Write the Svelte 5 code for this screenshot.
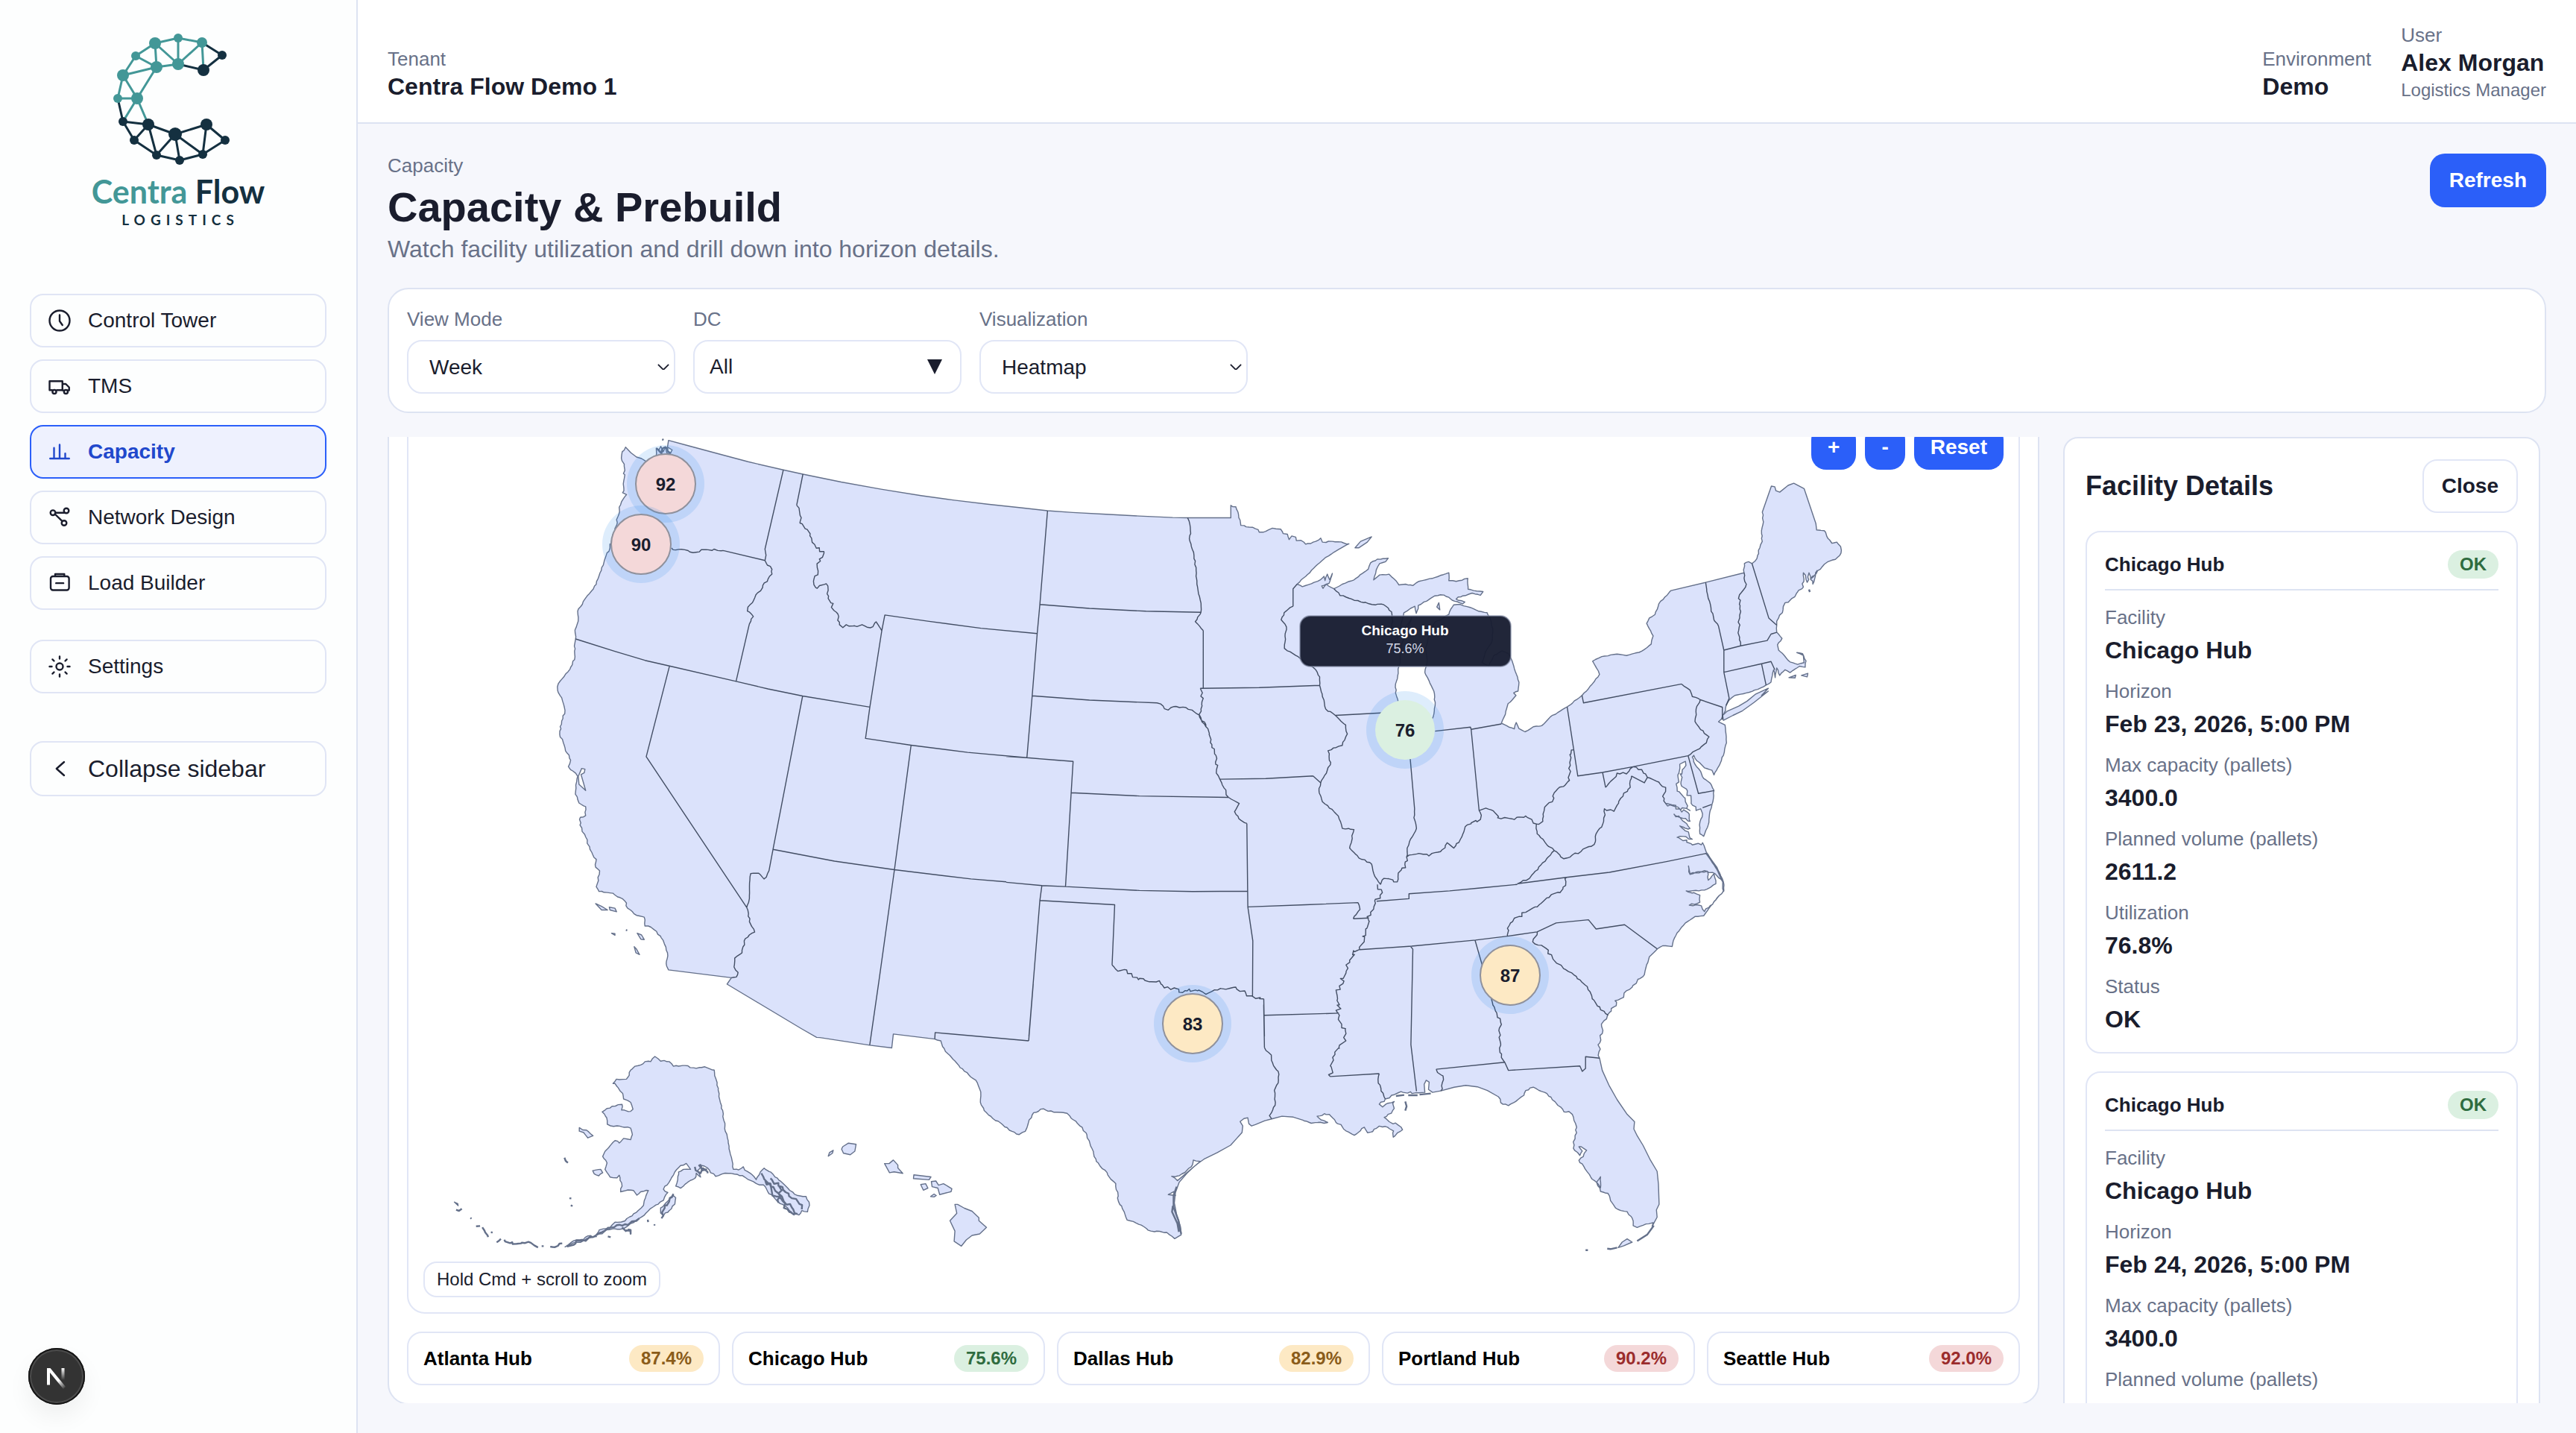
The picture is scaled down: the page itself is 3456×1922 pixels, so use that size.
<script>
  const nav = [
    { label: 'Control Tower', icon: 'clock' },
    { label: 'TMS', icon: 'truck' },
    { label: 'Capacity', icon: 'chart', active: true },
    { label: 'Network Design', icon: 'network' },
    { label: 'Load Builder', icon: 'load' }
  ];

  const hubs = [
    { name: 'Atlanta Hub', value: '87.4%', tone: 'warn' },
    { name: 'Chicago Hub', value: '75.6%', tone: 'ok' },
    { name: 'Dallas Hub', value: '82.9%', tone: 'warn' },
    { name: 'Portland Hub', value: '90.2%', tone: 'bad' },
    { name: 'Seattle Hub', value: '92.0%', tone: 'bad' }
  ];

  const markers = [
    { x: 893, y: 649, label: '92', tone: 'bad' },
    { x: 860, y: 730, label: '90', tone: 'bad' },
    { x: 1600, y: 1373, label: '83', tone: 'warn' },
    { x: 2026, y: 1308, label: '87', tone: 'warn' },
    { x: 1885, y: 979, label: '76', tone: 'ok' }
  ];

  const facility = (date) => [
    ['Facility', 'Chicago Hub'],
    ['Horizon', date],
    ['Max capacity (pallets)', '3400.0'],
    ['Planned volume (pallets)', '2611.2'],
    ['Utilization', '76.8%'],
    ['Status', 'OK']
  ];
  const details = [facility('Feb 23, 2026, 5:00 PM'), facility('Feb 24, 2026, 5:00 PM')];

  // Each map sheet has its own origin and grid step: [x, y, stepX, stepY].
  const sheets = {
    A: [700, 570, 0.44643, 0.47832],
    B: [1350, 640, 0.44643, 0.47832],
    C: [1700, 640, 0.5102, 0.47832],
    D: [540, 1380, 0.38265, 0.34566],
    E: [1100, 1300, 0.5102, 0.39668],
    F: [1750, 1150, 0.44643, 0.49235]
  };

  let seed = 7;
  function rand() {
    seed = (seed * 16807) % 2147483647;
    return seed / 2147483647 - 0.5;
  }

  // Converts "A: x,y x,y" into points; "~n" adds a river or shoreline waver of n pixels.
  function points(line) {
    const [head, body] = line.split(':');
    const [id, wave] = head.trim().split('~');
    const [ox, oy, sx, sy] = sheets[id];
    let pts = body.trim().split(/\s+/).map((p) => {
      const [x, y] = p.split(',').map(Number);
      return [ox + x * sx, oy + y * sy];
    });
    if (wave) {
      const out = [pts[0]];
      for (let i = 1; i < pts.length; i++) {
        const [ax, ay] = pts[i - 1];
        const [bx, by] = pts[i];
        const len = Math.hypot(bx - ax, by - ay);
        const n = Math.max(1, Math.round(len / 4));
        for (let k = 1; k < n; k++) {
          out.push([
            ax + ((bx - ax) * k) / n + rand() * wave,
            ay + ((by - ay) * k) / n + rand() * wave
          ]);
        }
        out.push([bx, by]);
      }
      pts = out;
    }
    return pts;
  }
  const toPath = (pts) => 'M' + pts.map((p) => p[0].toFixed(1) + ' ' + p[1].toFixed(1)).join('L');
  const open = (list) => list.map((l) => toPath(points(l))).join('');
  const closed = (list) => list.map((l) => toPath(points(l)) + 'Z').join('');

  const mainland = toPath([
    'A: 312,62 328,78 345,90 360,94 372,101 390,108 402,98 405,80 404,65 412,70 418,60 425,75 432,62 436,78 445,82 452,70 438,62 441,43 500,58 600,83 680,103 786,126 845,138 960,160 1080,180 1200,198 1300,211 1400,222 1500,232',
    'B: 124,94 200,99 300,104 400,109 500,113 545,114 675,114 675,79',
    'B~2: 675,79 690,83 698,105 705,135 730,140 757,147 760,154 780,152 800,143 825,146 832,158 845,160 850,175 858,165 870,168 872,178 885,177 900,188 915,186 930,180 945,171 950,182 980,180 1030,187',
    'B~1: 1030,187 1000,202 960,225 935,245 900,278 874,300 890,307 925,295 945,287 955,278 958,290 965,272 972,288 980,270 970,298 962,300 948,305 952,312 962,300 985,313 1010,300 1045,288 1070,270 1088,258 1095,240 1115,230 1148,227 1140,237 1122,242 1112,260 1104,288 1122,274 1150,272 1165,285 1180,302 1200,300 1222,304 1240,292 1280,284 1330,268 1330,290 1352,292 1387,284 1388,314 1405,318 1433,321 1425,331 1400,325 1380,332 1358,336 1352,342 1378,350 1372,355 1340,345',
    'B~2: 1340,345 1330,337 1305,330 1275,340 1255,350 1238,360 1232,382 1228,362 1215,368 1205,375 1195,380 1190,400 1175,440 1163,470 1185,440 1218,395 1205,430 1190,465 1184,510 1180,530 1178,550 1170,580 1170,605 1178,630 1195,660',
    'B~1: 1195,660 1210,690 1240,700 1270,690 1283,672 1289,640 1285,600 1270,570 1258,548 1265,515 1260,480 1275,430 1290,405 1305,400 1330,385 1336,370 1345,358 1365,357 1385,363 1420,376 1445,380 1456,400 1462,425 1460,460 1440,490 1430,520 1450,530 1465,500 1490,487 1510,495 1520,515 1530,545 1541,575 1538,600 1525,605 1532,612 1520,625 1508,635 1500,665 1488,690',
    'C~1: 616,690 630,697 650,706 655,688 662,705 678,714 700,700 722,697 745,672 770,656 789,644 828,612 855,580 874,553 866,535 856,516 880,503 920,496 945,500 985,488 1010,468 1015,445 1005,425 998,410 1005,395 1020,385 1030,355 1062,318',
    'C: 1062,318 1153,295 1254,268',
    'C~2: 1254,268 1255,242 1266,237 1275,242 1288,228 1292,205 1302,180 1300,150 1305,125 1302,98',
    'C: 1302,98 1326,25 1335,27 1338,38 1348,42 1370,23 1385,17 1412,32 1443,130',
    'C~3: 1445,148 1465,150 1475,172 1485,185 1498,182 1510,205 1500,225 1480,235 1455,258 1440,275 1430,285 1446,262 1435,300 1425,268 1420,295 1410,268 1410,308 1395,322 1380,340 1362,352 1355,380 1345,395 1340,415 1340,435',
    'C~1: 1340,435 1354,452 1342,470 1345,485 1360,500 1375,518 1395,525 1412,520 1410,500 1393,492 1408,495 1417,515 1415,533 1400,530 1388,538 1375,548 1362,540 1348,556 1340,535 1336,562 1332,540 1325,575 1312,583 1290,595 1260,605 1230,612 1215,625 1207,640 1205,655 1195,678 1187,686 1204,695 1208,745 1200,780 1185,815 1175,835 1170,822 1150,815 1130,795 1122,780 1118,785 1125,805 1140,825 1148,845 1165,858 1175,878 1172,910 1165,935 1160,975 1148,1007 1138,1000 1137,975 1145,945',
    'C~5: 1145,945 1140,930 1128,935 1115,915 1105,880 1088,860 1092,820 1100,797 1085,805 1080,835 1078,870 1090,890 1100,910 1112,935 1080,925 1048,915 1085,930 1110,945 1112,965 1070,945 1095,965 1112,985 1085,978 1108,995 1118,1015 1078,1010 1115,1028 1145,1025',
    'C~1: 1145,1025 1155,1052 1170,1080 1190,1110 1200,1135 1201,1160 1175,1190 1148,1230 1125,1232 1100,1250 1078,1278 1068,1300 1065,1316 1040,1314 1026,1323 1005,1345 996,1375 992,1395',
    'C~4: 992,1395 975,1408 960,1430 945,1440 930,1462 915,1468 918,1482 905,1490 895,1508',
    'F~4: 911,430 900,445 893,460 895,480 888,505 885,530 887,547',
    'F: 887,547 895,580 915,620 940,660 970,700 992,720 990,740 1000,758 1018,785 1040,825 1060,855 1064,890 1066,945 1058,960 1060,980 1045,1005 1048,995',
    'F~2: 1048,995 1035,998 1000,1008 988,1003 988,990 970,965 935,955 920,935 912,915 890,910 878,885 890,870 890,900 878,885 860,870 835,835 825,825 838,815 848,798 838,792 825,788 835,800 828,812 812,798 808,775 818,750 815,725 805,700 795,692 780,693 770,680 745,660 722,640 688,626 665,635 660,648 635,665 613,676 590,668 583,652',
    'F: 583,652 550,635 520,625 485,621 450,626 410,636 385,640 373,632 375,612 366,607 360,618 362,640',
    'F~3: 362,640 335,641 290,638 262,648 243,658 225,672 235,680 245,672 262,668 270,665 265,690 240,708 255,720 280,728 295,742 280,750 267,762 268,745 250,735 225,732',
    'F~3: 225,732 205,747 190,750 180,735 168,745 150,757 125,745 110,728 95,722 75,700 60,698 38,705 50,715 70,722 40,722 15,722 0,718',
    'E: 1270,510 1245,500 1215,497 1188,506 1170,512 1145,525 1135,530 1128,522 1125,502 1115,505 1105,515 1112,530 1110,552 1096,572 1080,595 1045,620 1010,642 985,665 965,690 945,720 935,755 932,790 938,830 948,870 950,898 933,911',
    'E~2: 933,911 912,890 870,885 845,865 808,848 800,820 785,785 778,725 765,710 750,680 727,650 715,605 702,560 690,535 665,508 650,487 600,480 588,472 562,485 548,520 540,548 524,559 505,548 480,525 455,505 432,478 422,450 423,415 410,375 380,345 355,310 330,278 318,242 302,236',
    'E: 302,236 193,219 189,266 131,257 0,231',
    'D: 1452,33 1400,0',
    'A: 617,1568 630,1550 441,1528',
    'A~2: 441,1528 434,1510 438,1480 425,1445 405,1420 388,1408 370,1405 368,1380 345,1375 318,1355 310,1335 295,1325 265,1312 232,1308 224,1295 234,1250 222,1240 224,1218 205,1190 192,1155 175,1122 176,1100 192,1095 192,1070 172,1060 161,1035 165,1000 168,985 140,958 147,940 130,905 114,868 120,830 130,800 120,765 108,745 110,725 145,685 160,650 158,620 162,600 160,575 170,540 168,522 190,488 215,460 235,415 250,375 265,345',
    'A~3: 265,345 280,290 292,250 300,215 315,195 303,190 308,150 308,110 301,100 302,75 312,62'
  ].flatMap(points)) + 'Z';

  const borders = open([
    'A~3: 450,345 455,350 490,350 505,356 560,350 605,352',
    'A: 605,352 731,380',
    'A: 786,126 731,348 734,365 731,380',
    'A~3: 731,380 738,393 752,405 752,418 740,432 718,465 700,485 685,505 678,522 696,537 682,565',
    'A: 682,565 644,719',
    'A: 162,600 280,635 370,660 444,676 644,719 740,740 844,760 1046,791',
    'A: 845,138 826,225',
    'A~4: 826,225 840,260 836,275 858,293 880,335 895,355 908,355 888,400 890,420 878,432 878,448 888,458 915,445 922,480 938,520 950,530 955,560 965,568 975,560 1000,563 1030,563 1055,566 1065,552 1082,577',
    'A: 1082,577 1091,533 1220,550 1380,570 1549,585',
    'A: 1082,577 1046,791 1033,879 1170,898 1340,918 1518,933 1620,941',
    'B: 124,94 101,357 93,439 78,613 62,787',
    'A: 444,676 374,930 676,1353',
    'A: 844,760 755,1190 743,1250',
    'A~2: 743,1250 735,1268 728,1273 718,1262 712,1257 688,1258 684,1320 676,1353 688,1400 700,1422 672,1440 662,1480 640,1495 638,1520 650,1535 645,1548 630,1550',
    'A: 755,1190 940,1223 1120,1247 1350,1273 1456,1281',
    'A: 1170,898 1120,1247 1072,1568',
    'E: 154,50 131,257',
    'E: 549,242 303,214 302,236',
    'B: 107,1145 101,1187 68,1568',
    'E: 561,50 549,242',
    'B: 0,783 62,787 201,797 195,885 178,1148',
    'B: 101,357 250,368 420,376 585,379',
    'B: 78,613 250,625 453,633',
    'B~3: 453,633 487,653 495,646 540,646 565,658 585,675 600,700',
    'B: 195,885 400,894 668,898',
    'B: 0,1136 107,1145 178,1148 400,1159 560,1162 725,1161',
    'B: 101,1187 326,1199 318,1368',
    'B~5: 318,1368 335,1385 362,1382 380,1402 430,1415 460,1412 475,1432 505,1432 530,1445 550,1435 575,1440 600,1450 625,1438 660,1436 690,1430 720,1447 750,1462 774,1463',
    'B: 774,1463 776,1568',
    'B: 726,1205 741,1300 740,1455',
    'B: 776,1509 1000,1503',
    'E: 1167,120 1169,265',
    'E~2: 1169,265 1187,290 1190,315 1207,355 1205,385 1195,410 1197,460 1182,495 1188,506',
    'B~2: 668,898 700,915 686,938 705,962 723,971',
    'B: 723,971 726,1205',
    'B: 726,1205 900,1199 1057,1193',
    'B~2: 1057,1193 1063,1212 1043,1238',
    'B: 1043,1238 1090,1236',
    'B~2: 545,114 553,140 552,180 568,235 573,300 583,345 585,379 568,405 592,430',
    'B: 592,430 592,591',
    'B~4: 583,592 592,620 585,650 580,665 600,700 618,750 630,780 632,820 642,847 655,872 668,898',
    'B: 583,592 760,590 942,584',
    'B: 642,847 780,845 922,838',
    'B: 922,838 945,857',
    'B: 874,300 862,313 862,362',
    'B~2: 862,362 835,380 826,400 842,420 836,480 870,500 930,540 942,560 942,584 955,625 960,650 989,668 1020,695 1025,720 1010,752 967,767 975,800 962,830 945,857 940,880 950,910 998,950 1010,985 1045,988 1032,1040 1060,1068 1098,1085 1108,1120 1125,1142',
    'B: 989,668 1125,661 1200,658',
    'B~2: 985,313 1003,332 1090,355 1135,358 1158,378 1162,440',
    'B: 1214,790 1227,930',
    'B~2: 1227,930 1225,955 1233,985 1215,1015 1205,1040 1203,1065',
    'B: 1289,712 1395,701 1397,707 1488,692',
    'B: 1397,707 1421,935',
    'B~4: 1125,1142 1135,1125 1175,1135 1178,1110 1200,1095 1203,1065 1240,1055 1270,1062 1305,1050 1325,1025 1345,1040 1365,1015 1385,975 1425,960 1421,935',
    'C~4: 557,935 575,928 600,942 615,958 650,960 680,950 700,970 710,973 725,965 730,925 750,910 755,885 795,850 800,765 806,765',
    'C: 789,644 817,838 882,828 962,812 1107,781 1134,887 1175,879',
    'C: 828,612 832,633 1090,580',
    'C~2: 1090,580 1112,597 1118,615 1139,624',
    'C: 1139,624 1197,645 1197,680',
    'C~2: 1139,624 1128,650 1125,685 1140,708 1162,728 1155,745 1130,765 1120,770 1107,781',
    'C: 1145,927 1168,918',
    'C~3: 890,870 920,830 945,832 962,812 985,820 1000,842 1030,855 1048,870 1040,895 1048,915',
    'C: 882,828 890,870',
    'C: 1000,842 992,857 958,838',
    'C~3: 958,838 955,870 930,900 912,937 887,930 885,965 865,1000 860,1030 825,1050 780,1070 755,1047 735,1030 710,1000 708,973',
    'C~2: 755,1047 735,1070 705,1105 690,1125 658,1140',
    'C: 658,1140 787,1122 900,1108 1050,1078 1155,1055',
    'C: 288,1189 373,1182 373,1168 480,1160 560,1152 658,1142',
    'C: 243,1325 380,1315 548,1298 632,1287 710,1275 760,1250 845,1241 865,1267 940,1255 1026,1323',
    'C~4: 787,1122 785,1145 770,1165 735,1180 710,1205 680,1220 640,1250 632,1265 632,1287',
    'C~6: 290,1142 303,1165 283,1188 272,1220 262,1265 243,1325',
    'F~8: 165,251 145,265 125,315 105,350 98,390 105,430 125,480 105,520 85,545 78,597',
    'F: 78,597 225,589',
    'F~2: 225,589 222,615 243,658',
    'F: 318,241 326,250 320,510 337,637',
    'F: 513,226 535,295 565,395',
    'F~3: 565,395 590,450 585,490 592,545 602,558',
    'F~3: 410,636 418,605 410,592 396,577',
    'F: 396,577 602,558 613,580 828,568 835,583 845,575 845,543 887,547',
    'F~3: 700,203 686,230 725,247 750,280 810,320 850,352 865,385 890,415 913,430',
    'C~2: 1153,295 1160,340 1175,400 1187,418',
    'C: 1187,418 1201,485 1201,547 1215,620 1207,640',
    'C~3: 1254,268 1260,300 1242,330 1243,370 1240,430 1245,473',
    'C: 1275,242 1319,395 1340,415',
    'C: 1201,485 1245,473 1315,458 1325,440 1340,435',
    'C: 1201,547 1300,523 1325,517 1335,540',
    'C: 1300,523 1312,583'
  ]);

  const islands = closed([
    'D~2: 1093,160 1160,545 1178,547 1195,535 1200,548 1225,565 1240,585 1255,555 1268,540 1300,565 1335,600 1375,642 1415,650 1427,685 1420,710 1400,705 1390,722 1370,720 1345,690 1315,670 1300,650 1285,640 1265,605 1240,600 1200,575 1175,565 1150,560 1120,563 1098,572 1080,558 1070,540 1050,530 1035,550 1045,575 1030,560 1025,580 1000,595 975,618 958,610 965,585 968,555 985,545 1010,545 995,522 975,530 955,555 940,585 915,622 930,635 915,665 880,690 860,708 830,735 800,755 775,775 740,775 715,780 700,795 680,798 690,780 725,775 745,750 780,745 820,712 845,685 852,655 862,627 835,632 822,645 810,627 790,625 765,632 770,610 760,568 752,578 728,575 710,545 717,520 702,495 710,475 745,433 760,443 775,425 800,430 806,410 800,385 770,380 740,378 718,370 716,345 700,322 735,300 770,293 768,315 800,320 808,312 800,285 775,272 772,250 745,212 738,212 750,195 785,195 795,180 800,160 815,145 835,140 850,127 870,127 885,107 905,125 935,127 950,145 990,142 1030,153 1060,147 1093,160',
    'D~3: 905,695 930,668 948,645 958,655 955,680 935,705 915,725 905,715',
    'D~1: 620,383 632,392 645,393 668,415 650,423 635,402 620,397',
    'D~1: 667,550 695,545 702,558 688,570 672,562',
    'D: 182,672 194,678 195,686',
    'D~2: 570,846 600,822 635,816 650,803 680,806 650,812 625,828 600,830',
    'E: 355,795 362,795 380,808 400,818 418,840 418,850 438,873 420,895 400,900 385,915 372,936 353,920 355,885 342,850 360,825',
    'E: 293,718 305,716 312,730 325,725 347,742 345,752 315,762 310,740 295,735',
    'E: 247,695 292,702 287,712 246,708',
    'E: 265,728 278,725 284,740 272,747',
    'E: 291,768 300,760 306,765 300,770',
    'E: 170,657 182,657 193,645 205,662 205,672 218,690 195,685 183,688',
    'E: 60,600 75,588 95,592 92,615 80,627 62,622 57,608',
    'E: 22,632 25,620 35,612 33,622',
    'A: 222,1342 240,1350 258,1360 240,1360',
    'A: 263,1352 280,1355 285,1365 265,1360',
    'A: 270,1425 280,1426 280,1431',
    'A: 347,1425 360,1430 368,1443 358,1442',
    'A: 338,1463 345,1470 354,1485 343,1480',
    'F: 943,1063 955,1048 970,1039 985,1048 960,1058',
    'B: 1048,198 1065,180 1098,167 1085,182 1060,198',
    'C: 1200,682 1198,668 1210,656 1240,642 1262,628 1285,608 1318,592 1300,612 1318,600 1280,632 1250,655 1225,668',
    'C: 1405,556 1422,550 1420,560',
    'C: 1372,562 1390,555 1388,563',
    'B: 1300,352 1303,372 1294,364'
  ]);

  const specks = open([
    'D: 568,500 572,512 580,520',
    'D: 585,657 592,658',
    'D: 590,684 596,688',
    'D~3: 188,702 198,706 208,698',
    'D: 238,733 242,736',
    'D~2: 258,766 272,765',
    'D~3: 280,770 290,790 300,808',
    'D: 310,789 316,790',
    'D~2: 330,828 345,815',
    'D~5: 357,818 385,828 400,834 430,831 450,830 462,840 475,848',
    'D: 488,843 495,843',
    'D~3: 518,845 545,842 560,832',
    'D~5: 575,840 635,820 680,800 720,772 780,758 830,735',
    'D~3: 720,805 730,808',
    'D~6: 770,770 785,782 800,795 790,778',
    'D: 860,740 861,750',
    'D: 883,758 884,763',
    'D~5: 1258,560 1290,600 1330,650 1370,700 1385,718',
    'D~6: 1272,590 1310,650 1350,700 1375,722',
    'D~5: 1290,580 1335,625 1380,660 1400,700',
    'D~6: 1320,610 1325,650 1318,675',
    'D~6: 1025,535 1045,560 1065,545 1040,530 1070,560',
    'D~5: 950,640 935,670 910,712 908,735',
    'F: 1000,1045 1030,1028 1050,1003',
    'F: 910,1066 920,1067 940,1063',
    'F: 845,1070 852,1070',
    'F: 303,665 307,678 303,690',
    'F: 275,650 300,647',
    'F: 312,648 340,648',
    'F: 346,646 380,643',
    'E: 950,895 943,850 930,805 930,765 938,735',
    'E: 928,800 926,820 940,860 944,888',
    'C: 1155,1055 1182,1095 1196,1130',
    'C: 1425,315 1427,322',
    'A: 422,40 426,42',
    'A~4: 405,65 420,80 432,62 448,80',
    'A: 313,1416 317,1417'
  ]);

  const waters = closed([
    'A: 170,985 180,963 190,965 188,975 178,980 186,1005 192,1025 172,1008',
    'C~2: 1108,1090 1112,1114 1150,1103 1178,1112 1198,1135 1200,1160 1175,1190 1150,1218 1142,1202 1110,1200 1138,1192 1138,1172 1102,1160 1150,1158 1180,1140 1175,1112 1160,1130 1158,1105 1112,1112',
    'E~2: 940,715 925,700 945,698 965,680 980,660 982,645 1000,650',
    'E: 935,765 916,762 930,752'
  ]);

  const logoNodes = [
    [208, 58, 8, 0], [239, 51, 6, 0], [271, 57, 7, 0], [298, 74, 6, 1], [273, 94, 8, 1],
    [239, 86, 8, 0], [210, 90, 8, 0], [182, 75, 6, 0], [165, 101, 8, 0], [158, 132, 6, 0],
    [184, 132, 8, 0], [165, 163, 6, 1], [199, 167, 8, 1], [180, 188, 6, 1], [210, 208, 6, 1],
    [235, 180, 9, 1], [241, 215, 6, 1], [272, 207, 6, 1], [277, 167, 8, 1], [302, 188, 6, 1]
  ];
  const logoEdges = [
    [[1, 2], [2, 3], [1, 8], [1, 7], [1, 6], [2, 6], [3, 6], [3, 5], [8, 7], [8, 9], [7, 6], [7, 9], [7, 11], [9, 10], [9, 11], [10, 11], [11, 12], [11, 13]],
    [[3, 4], [4, 5], [6, 5], [10, 12], [12, 13], [12, 14], [13, 14], [13, 15], [13, 16], [14, 15], [15, 16], [15, 17], [16, 17], [16, 18], [16, 19], [17, 18], [18, 19], [18, 20], [19, 20]]
  ].map((set) =>
    set.map(([a, b]) => {
      const p = logoNodes[a - 1];
      const q = logoNodes[b - 1];
      return `M${p[0]} ${p[1]}L${q[0]} ${q[1]}`;
    }).join('')
  );
</script>

{#snippet icon(name)}
  <svg class="icon" viewBox="0 0 24 24" aria-hidden="true">
    {#if name === 'clock'}
      <circle cx="12" cy="12" r="9" /><path d="M12 7v5.5l2.5 3.5" />
    {:else if name === 'truck'}
      <path d="M5.3 15.5H3V7.5h11.5v8H9.5M14.5 10h3l3 3v2.7h-1M15.3 15.7h-1" />
      <circle cx="7.3" cy="17" r="1.7" /><circle cx="17.6" cy="17" r="1.7" />
    {:else if name === 'chart'}
      <path d="M3.5 18h17M7 18V8.5M12 18V5.7M17 18v-4.5" />
    {:else if name === 'network'}
      <circle cx="6" cy="7.8" r="2.2" /><circle cx="18" cy="6" r="2.2" /><circle cx="16" cy="17" r="2.2" />
      <path d="M8.2 7.8h8M7.8 9l6.6 6.4" />
    {:else if name === 'load'}
      <rect x="4" y="6" width="16.4" height="12.3" rx="2" /><path d="M8 5.5V4h8.2v1.5M8.8 12.1h6.6" />
    {:else if name === 'settings'}
      <circle cx="12" cy="12" r="3" />
      <path d="M12 3v2M12 19v2M3 12h2M19 12h2M5.6 5.6 7 7M17 17l1.4 1.4M5.6 18.4 7 17M17 7l1.4-1.4" />
    {:else}
      <path d="M16 6 9.200 12l6.800 6" />
    {/if}
  </svg>
{/snippet}

<div class="app">
  <aside class="sidebar">
    <svg class="logo" viewBox="109 40 260 272" role="img" aria-label="Centra Flow Logistics">
      <path class="edge teal" d={logoEdges[0]} />
      <path class="edge navy" d={logoEdges[1]} />
      {#each logoNodes as n}
        <circle class={n[3] ? 'dot navy' : 'dot teal'} cx={n[0]} cy={n[1]} r={n[2]} />
      {/each}
      <text class="brand" x="239" y="273" text-anchor="middle"><tspan class="teal">Centra</tspan> <tspan class="navy">Flow</tspan></text>
      <text class="brand-sub navy" x="242" y="302" text-anchor="middle">LOGISTICS</text>
    </svg>
    <nav>
      {#each nav as item}
        <a href="#{item.icon}" class="nav-item" class:active={item.active} aria-current={item.active ? 'page' : undefined}>
          {@render icon(item.icon)}<span>{item.label}</span>
        </a>
      {/each}
      <a href="#settings" class="nav-item settings">{@render icon('settings')}<span>Settings</span></a>
    </nav>
    <button class="collapse" type="button">{@render icon('back')}<span>Collapse sidebar</span></button>
  </aside>

  <div class="page">
    <header class="topbar">
      <div class="meta"><span class="muted">Tenant</span><strong>Centra Flow Demo 1</strong></div>
      <div class="meta push"><span class="muted">Environment</span><strong>Demo</strong></div>
      <div class="meta"><span class="muted">User</span><strong>Alex Morgan</strong><small>Logistics Manager</small></div>
    </header>

    <main>
      <section class="intro">
        <div>
          <p class="muted crumb">Capacity</p>
          <h1>Capacity &amp; Prebuild</h1>
          <p class="lead">Watch facility utilization and drill down into horizon details.</p>
        </div>
        <button class="primary refresh" type="button">Refresh</button>
      </section>

      <section class="filters">
        <div class="filter">
          <label for="view-mode">View Mode</label>
          <div class="picker">
            <select id="view-mode"><option>Week</option><option>Day</option></select>
            <svg viewBox="0 0 18 10" aria-hidden="true"><path d="M1 1l8 8 8-8" /></svg>
          </div>
        </div>
        <div class="filter">
          <label for="dc">DC</label>
          <button id="dc" class="dc" type="button" aria-haspopup="listbox">
            All<svg viewBox="0 0 20 20" aria-hidden="true"><path d="M0 0h20L10 20z" /></svg>
          </button>
        </div>
        <div class="filter">
          <label for="visualization">Visualization</label>
          <div class="picker">
            <select id="visualization"><option>Heatmap</option><option>Table</option></select>
            <svg viewBox="0 0 18 10" aria-hidden="true"><path d="M1 1l8 8 8-8" /></svg>
          </div>
        </div>
      </section>

      <section class="panels">
        <div class="map-scroll">
          <div class="map-card">
            <div class="map-box">
              <svg class="map" viewBox="548 554 2160 1206" role="img" aria-label="Facility utilization map">
                <path class="land" d={mainland} />
                <path class="land" d={islands} />
                <path class="water" d={waters} />
                <path class="specks" d={specks} />
                <path class="borders" d={borders} />
                {#each markers as m}
                  <circle class="halo" cx={m.x} cy={m.y} r="52" />
                  <circle class="pin {m.tone}" cx={m.x} cy={m.y} r="40" />
                  <text class="pin-label" x={m.x} y={m.y + 9} text-anchor="middle">{m.label}</text>
                {/each}
                <rect class="tip" x="1744" y="826" width="283" height="68" rx="14" />
                <text class="tip-name" x="1885" y="852" text-anchor="middle">Chicago Hub</text>
                <text class="tip-value" x="1885" y="876" text-anchor="middle">75.6%</text>
              </svg>
              <div class="zoom">
                <button class="primary" type="button" aria-label="Zoom in">+</button>
                <button class="primary" type="button" aria-label="Zoom out">-</button>
                <button class="primary" type="button">Reset</button>
              </div>
              <div class="hint">Hold Cmd + scroll to zoom</div>
            </div>
            <div class="hubs">
              {#each hubs as hub}
                <button class="hub" type="button"><span>{hub.name}</span><span class="pill {hub.tone}">{hub.value}</span></button>
              {/each}
            </div>
          </div>
        </div>

        <div class="side-scroll">
          <aside class="details">
            <div class="details-head"><h2>Facility Details</h2><button class="close" type="button">Close</button></div>
            {#each details as fields}
              <article>
                <div class="card-head"><h3>Chicago Hub</h3><span class="pill ok tall">OK</span></div>
                <dl>
                  {#each fields as [name, value]}
                    <div><dt>{name}</dt><dd>{value}</dd></div>
                  {/each}
                </dl>
              </article>
            {/each}
          </aside>
        </div>
      </section>
    </main>
  </div>

  <button class="dev" type="button" aria-label="Open developer tools">
    <svg viewBox="0 0 76 76" aria-hidden="true">
      <defs>
        <linearGradient id="fade-a" gradientUnits="userSpaceOnUse" x1="41" y1="43" x2="50" y2="54"><stop stop-color="#fff" /><stop offset="1" stop-color="#fff" stop-opacity="0" /></linearGradient>
        <linearGradient id="fade-b" x1="0" y1="0" x2="0" y2="1"><stop stop-color="#fff" /><stop offset="1" stop-color="#fff" stop-opacity="0" /></linearGradient>
      </defs>
      <path d="M25 27h4.5l20.5 25-3 3L29 33v16.500h-4z" fill="url(#fade-a)" />
      <rect x="44.500" y="27" width="4" height="16" fill="url(#fade-b)" />
    </svg>
  </button>
</div>

<style>
  :global(body) {
    background: #f6f7fc;
    font-family: "Liberation Sans", Arial, sans-serif;
    color: #1a1d2d;
  }
  :global(*) {
    box-sizing: border-box;
  }
  p, h1, h2, h3, dl, dd {
    margin: 0;
  }
  button, select {
    font-family: inherit;
    color: inherit;
  }
  .app {
    display: grid;
    grid-template-columns: 480px minmax(0, 1fr);
    height: 100vh;
  }
  .muted, label, dt {
    font-size: 26px;
    color: #687188;
  }

  .sidebar {
    padding: 40px;
    border-right: 2px solid #dde3f2;
    background: #fdfefe;
    display: flex;
    flex-direction: column;
  }
  .logo {
    width: 260px;
    align-self: center;
    margin-bottom: 82px;
  }
  .edge {
    fill: none;
    stroke-width: 3;
  }
  .edge.teal { stroke: #439797; }
  .edge.navy { stroke: #143040; }
  .dot.teal, tspan.teal { fill: #439797; }
  .dot.navy, .navy { fill: #143040; }
  .edge.navy { fill: none; }
  .brand {
    font: 700 43px Lato, sans-serif;
  }
  .brand-sub {
    font: 700 19px Lato, sans-serif;
    letter-spacing: 7px;
  }
  nav {
    display: flex;
    flex-direction: column;
    gap: 16px;
  }
  .nav-item, .collapse {
    display: flex;
    align-items: center;
    gap: 20px;
    height: 72px;
    padding: 0 20px;
    border: 2px solid #e0e5f5;
    border-radius: 18px;
    background: transparent;
    color: #1a1d2d;
    font-size: 28px;
    text-decoration: none;
  }
  .nav-item.active {
    border-color: #2b5ff9;
    background: #eef1fe;
    color: #2148cc;
    font-weight: 700;
  }
  .settings {
    margin-top: 24px;
  }
  .collapse {
    height: 74px;
    margin-top: 64px;
    font-size: 32px;
  }
  .icon {
    width: 36px;
    height: 36px;
    fill: none;
    stroke: currentColor;
    stroke-width: 1.6;
    stroke-linecap: round;
    stroke-linejoin: round;
  }

  .page {
    display: flex;
    flex-direction: column;
    min-height: 0;
  }
  .topbar {
    display: flex;
    align-items: flex-end;
    gap: 40px;
    padding: 32px 40px 30px;
    border-bottom: 2px solid #dde3f2;
    background: #fff;
  }
  .meta {
    display: flex;
    flex-direction: column;
    gap: 4px;
    line-height: 30px;
  }
  .meta strong {
    font-size: 32px;
    line-height: 36px;
  }
  .meta small {
    margin-top: 2px;
    font-size: 24px;
    line-height: 26px;
    color: #687188;
  }
  .push {
    margin-left: auto;
  }
  main {
    flex: 1;
    min-height: 0;
    display: flex;
    flex-direction: column;
    gap: 32px;
    padding: 40px;
  }
  .intro {
    display: flex;
    justify-content: space-between;
    align-items: flex-start;
  }
  .crumb {
    line-height: 32px;
  }
  h1 {
    margin-top: 8px;
    font-size: 56px;
    line-height: 64px;
  }
  .lead {
    margin-top: 4px;
    font-size: 32px;
    line-height: 40px;
    color: #687188;
  }
  .primary {
    border: 0;
    border-radius: 20px;
    background: #2b5ff9;
    color: #fff;
    font-size: 28px;
    font-weight: 700;
  }
  .refresh {
    height: 72px;
    padding: 0 26px;
  }

  .filters {
    display: flex;
    gap: 24px;
    padding: 24px;
    border: 2px solid #dde3f2;
    border-radius: 28px;
    background: #fff;
  }
  .filter {
    display: flex;
    flex-direction: column;
    gap: 12px;
    width: 360px;
  }
  label {
    line-height: 32px;
  }
  .picker {
    display: grid;
    align-items: center;
  }
  .picker select, .picker svg {
    grid-area: 1 / 1;
  }
  .picker svg {
    width: 16px;
    margin-right: 8px;
    justify-self: end;
    pointer-events: none;
    fill: none;
    stroke: #1a1d2d;
    stroke-width: 2;
  }
  select, .dc {
    width: 100%;
    height: 72px;
    border: 2px solid #e1e6f6;
    border-radius: 20px;
    background: #fff;
    font-size: 28px;
    appearance: none;
  }
  select {
    padding: 0 28px;
  }
  .dc {
    display: flex;
    align-items: center;
    justify-content: space-between;
    padding: 0 24px 0 20px;
  }
  .dc svg {
    width: 20px;
    fill: #1a1d2d;
  }

  .panels {
    flex: 1;
    min-height: 0;
    display: grid;
    grid-template-columns: minmax(0, 1fr) 648px;
    gap: 32px;
  }
  .map-scroll {
    display: flex;
    flex-direction: column;
    justify-content: flex-end;
    min-height: 0;
    overflow: hidden;
  }
  .map-card {
    flex-shrink: 0;
    margin-bottom: -2px;
    padding: 24px;
    border: 2px solid #dde3f2;
    border-radius: 28px;
    background: #fff;
  }
  .map-box {
    position: relative;
    border: 2px solid #e1e6f6;
    border-radius: 24px;
  }
  .map {
    display: block;
    width: 100%;
  }
  .land, .water, .specks, .borders {
    stroke: #64708a;
    stroke-width: 1.4;
    stroke-linejoin: round;
  }
  .land { fill: #dbe2fb; }
  .water { fill: #fff; }
  .specks {
    fill: none;
    stroke-width: 2.4;
  }
  .borders {
    fill: none;
    stroke: #434e64;
  }
  .halo {
    fill: #2187eb;
    fill-opacity: .15;
  }
  .pin {
    stroke: #8f919c;
    stroke-width: 2;
  }
  .pin.bad { fill: #f4d8d9; }
  .pin.warn { fill: #fde9c4; }
  .pin.ok {
    fill: #dbf0e1;
    stroke: none;
  }
  .pin-label {
    font-size: 24px;
    font-weight: 700;
    fill: #1a1d2d;
  }
  .tip {
    fill: #181d31;
    fill-opacity: .96;
    stroke: #8790a8;
    stroke-opacity: .6;
    stroke-width: 2;
  }
  .tip-name {
    font-size: 19px;
    font-weight: 700;
    fill: #fff;
  }
  .tip-value {
    font-size: 18px;
    fill: #d3d8e6;
  }
  .zoom {
    position: absolute;
    top: 16px;
    right: 20px;
    display: flex;
    gap: 12px;
  }
  .zoom button {
    height: 60px;
    padding: 0 22px;
  }
  .hint {
    position: absolute;
    left: 20px;
    bottom: 20px;
    padding: 8px 16px;
    border: 2px solid #e1e6f6;
    border-radius: 18px;
    background: #fff;
    font-size: 24px;
    line-height: 28px;
  }
  .hubs {
    display: grid;
    grid-template-columns: repeat(5, minmax(0, 1fr));
    gap: 16px;
    margin-top: 24px;
  }
  .hub {
    display: flex;
    align-items: center;
    justify-content: space-between;
    height: 72px;
    padding: 0 20px;
    border: 2px solid #e1e6f6;
    border-radius: 20px;
    background: #fff;
    color: #000;
    font-size: 26px;
    font-weight: 700;
  }
  .pill {
    padding: 4px 16px;
    border-radius: 20px;
    font-size: 24px;
    font-weight: 700;
    line-height: 28px;
  }
  .pill.tall {
    line-height: 30px;
  }
  .pill.ok { background: #dbf0e1; color: #2f6c3f; }
  .pill.warn { background: #fde9c4; color: #8a5c1a; }
  .pill.bad { background: #f4d8d9; color: #9b2c2c; }

  .side-scroll {
    min-height: 0;
    padding-right: 8px;
    overflow-y: auto;
    scrollbar-width: none;
  }
  .details {
    display: flex;
    flex-direction: column;
    gap: 24px;
    padding: 28px;
    border: 2px solid #dde3f2;
    border-radius: 20px;
    background: #fff;
  }
  .details-head, .card-head {
    display: flex;
    align-items: center;
    justify-content: space-between;
  }
  h2 {
    font-size: 36px;
    line-height: 44px;
  }
  .close {
    height: 72px;
    padding: 0 24px;
    border: 2px solid #e1e6f6;
    border-radius: 20px;
    background: #fff;
    font-size: 28px;
    font-weight: 700;
  }
  article {
    padding: 24px;
    border: 2px solid #e1e6f6;
    border-radius: 20px;
  }
  .card-head {
    padding-bottom: 14px;
    border-bottom: 2px solid #dde3f2;
  }
  h3 {
    font-size: 26px;
    line-height: 32px;
  }
  dl {
    display: flex;
    flex-direction: column;
    gap: 19px;
    margin-top: 20px;
  }
  dt {
    line-height: 32px;
  }
  dd {
    margin-top: 8px;
    font-size: 32px;
    font-weight: 700;
    line-height: 40px;
  }

  .dev {
    position: fixed;
    left: 38px;
    bottom: 38px;
    width: 76px;
    height: 76px;
    padding: 0;
    border: 0;
    border-radius: 50%;
    background: #333;
    box-shadow: inset 0 0 0 2px #151515, inset 0 0 0 4px #4c4c4c, 0 16px 32px rgba(0, 0, 0, .06);
  }
  .dev svg {
    display: block;
    width: 76px;
  }
</style>
